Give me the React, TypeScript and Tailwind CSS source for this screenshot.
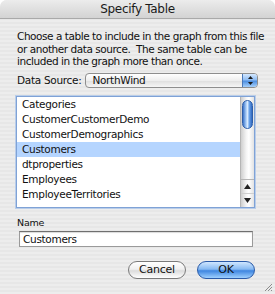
import React from "react";

const TABLES = [
  "Categories",
  "CustomerCustomerDemo",
  "CustomerDemographics",
  "Customers",
  "dtproperties",
  "Employees",
  "EmployeeTerritories",
];

const SELECTED = "Customers";

function PopupArrows() {
  return (
    <svg width="7" height="11" viewBox="0 0 7 11">
      <path d="M3.5 1 L6 4 L1 4 Z" fill="#1a1a1a" />
      <path d="M3.5 10 L6 7 L1 7 Z" fill="#1a1a1a" />
    </svg>
  );
}

function Scrollbar() {
  return (
    <div className="flex w-[14px] shrink-0 flex-col border-l border-[#b5b5b5] bg-[linear-gradient(90deg,#cfcfcf,#f4f4f4_40%,#ffffff_60%,#e2e2e2)]">
      {/* track + thumb */}
      <div className="flex flex-1 flex-col px-[1px] pt-[3px]">
        <div className="h-[29px] rounded-full border border-[#2f5fa8] bg-[linear-gradient(90deg,#3a73c9,#a9cdf7_35%,#d8ebff_50%,#6aa2e8_70%,#2f67bf)]" />
      </div>
      {/* arrows */}
      <div className="flex h-[14px] items-center justify-center border-t border-[#b5b5b5]">
        <svg width="7" height="5" viewBox="0 0 7 5">
          <path d="M3.5 0 L7 5 L0 5 Z" fill="#222" />
        </svg>
      </div>
      <div className="flex h-[14px] items-center justify-center border-t border-[#cfcfcf]">
        <svg width="7" height="5" viewBox="0 0 7 5">
          <path d="M0 0 L7 0 L3.5 5 Z" fill="#222" />
        </svg>
      </div>
    </div>
  );
}

export default function App() {
  return (
    <div
      className="relative h-[294px] w-[275px] overflow-hidden bg-white text-[#111]"
      style={{ fontFamily: '"DejaVu Sans", "Liberation Sans", sans-serif' }}
    >
      <div className="flex h-full flex-col rounded-t-[7px] bg-[repeating-linear-gradient(180deg,#ededed_0px,#ededed_2px,#e7e7e7_2px,#e7e7e7_4px)]">
        {/* Title bar */}
        <div className="flex h-[19px] shrink-0 items-center justify-center rounded-t-[7px] border-b border-[#a9a9a9] bg-[linear-gradient(180deg,#ececec,#d3d3d3)] text-[12px] tracking-[-0.3px] text-[#1a1a1a]">
          Specify Table
        </div>

        <div className="flex flex-col px-[17px]">
          <p className="mt-[11px] whitespace-nowrap text-[10.5px] leading-[12.5px] tracking-[-0.45px]">
            Choose a table to include in the graph from this file
            <br />
            or another data source.&nbsp; The same table can be
            <br />
            included in the graph more than once.
          </p>

          {/* Data Source */}
          <div className="mt-[5px] flex items-center gap-[4px]">
            <span className="text-[10.5px] tracking-[-0.3px]">Data Source:</span>
            <div className="flex h-[15px] flex-1 overflow-hidden rounded-[4px] border border-[#8e8e8e] bg-[linear-gradient(180deg,#ffffff,#eeeeee_50%,#e0e0e0_55%,#f6f6f6)]">
              <span className="flex-1 pl-[6px] text-[10.5px] leading-[13px] tracking-[-0.3px]">
                NorthWind
              </span>
              <div className="flex w-[15px] items-center justify-center border-l border-[#4a78b8] bg-[linear-gradient(180deg,#d4e8ff,#8fbdf3_45%,#4e8fe0_55%,#a6d0fb)]">
                <PopupArrows />
              </div>
            </div>
          </div>

          {/* Table list */}
          <div className="ml-[-1px] mt-[8px] flex h-[112px] w-[239px] border border-[#7fa2d6] bg-white shadow-[0_0_0_1px_#b9cde9]">
            <div className="flex flex-1 flex-col">
              {TABLES.map((t) => (
                <div
                  key={t}
                  className={
                    "h-[15px] pl-[5px] text-[10.5px] leading-[15px] tracking-[-0.3px] " +
                    (t === SELECTED ? "bg-[#b5d5ff]" : "")
                  }
                >
                  {t}
                </div>
              ))}
            </div>
            <Scrollbar />
          </div>

          {/* Name */}
          <span className="mt-[9px] text-[9.5px] leading-[12px] tracking-[-0.2px]">
            Name
          </span>
          <div className="ml-[2px] mt-[2px] h-[16px] w-[234px] border border-[#9a9a9a] border-t-[#6f6f6f] bg-white pl-[3px] text-[10.5px] leading-[14px] tracking-[-0.3px] shadow-[inset_0_1px_1px_rgba(0,0,0,0.15)]">
            Customers
          </div>

          {/* Buttons */}
          <div className="mr-[3px] mt-[14px] flex justify-end gap-[11px]">
            <button className="flex h-[18px] w-[58px] items-center justify-center rounded-full border border-[#7a7a7a] bg-[linear-gradient(180deg,#ffffff,#f0f0f0_45%,#dcdcdc_55%,#ffffff)] text-[11px] tracking-[-0.25px] text-[#111]">
              Cancel
            </button>
            <button className="flex h-[18px] w-[58px] items-center justify-center rounded-full border border-[#2a5aa8] bg-[linear-gradient(180deg,#cfe6ff,#86b9f2_45%,#3f86e0_55%,#9ed0ff)] text-[11px] tracking-[-0.25px] text-[#111]">
              OK
            </button>
          </div>
        </div>
      </div>

      {/* Resize grip */}
      <svg
        className="absolute bottom-[2px] right-[2px]"
        width="10"
        height="10"
        viewBox="0 0 10 10"
      >
        <path d="M9 2 L2 9 M9 5 L5 9 M9 8 L8 9" stroke="#8c8c8c" strokeWidth="1" />
      </svg>
    </div>
  );
}
